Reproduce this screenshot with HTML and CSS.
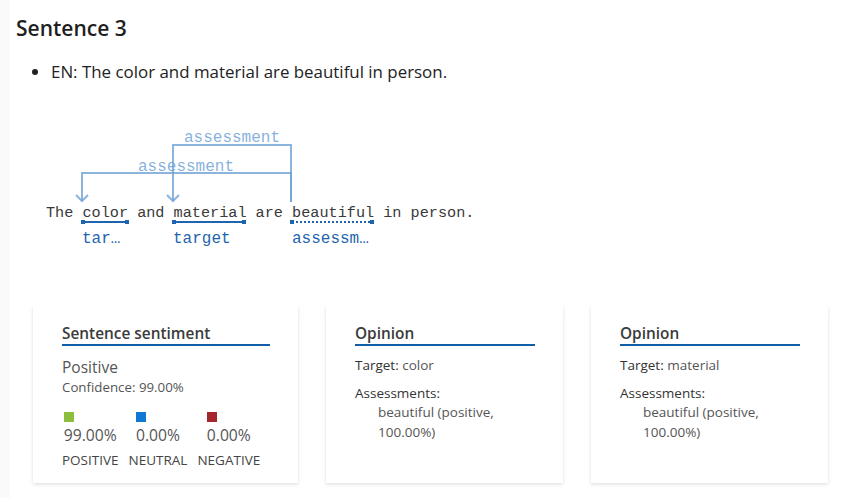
FILE: index.html
```html
<!DOCTYPE html>
<html lang="en">
<head>
<meta charset="utf-8">
<title>Sentence 3</title>
<link rel="stylesheet" href="styles.css">
</head>
<body>
<div class="page">
  <h2 class="heading">Sentence 3</h2>
  <ul class="bullets">
    <li>EN: The color and material are beautiful in person.</li>
  </ul>
  <svg class="diagram" width="500" height="140" viewBox="0 0 500 140" xmlns="http://www.w3.org/2000/svg">
    <g class="rel" fill="none" stroke="#6fa3d6" stroke-width="2" stroke-opacity="0.8">
      <path d="M291 83 V26 H173 V82"/>
      <path d="M167 76 L173 82 L179 76"/>
      <path d="M291 83 V54 H82 V82"/>
      <path d="M76 76 L82 82 L88 76"/>
    </g>
    <text class="rel-label" x="232" y="23" text-anchor="middle">assessment</text>
    <text class="rel-label" x="186" y="52" text-anchor="middle">assessment</text>
    <text class="sent" x="46" y="98" xml:space="preserve">The color and material are beautiful in person.</text>
    <g class="span-line" stroke="#1f64ae" stroke-width="2">
      <line x1="83" y1="103" x2="127" y2="103"/>
      <line x1="174" y1="103" x2="244" y2="103"/>
      <line x1="292" y1="103" x2="372" y2="103" stroke-dasharray="2 2"/>
    </g>
    <g fill="#1f64ae">
      <rect x="81" y="101" width="4" height="4"/>
      <rect x="125" y="101" width="4" height="4"/>
      <rect x="172" y="101" width="4" height="4"/>
      <rect x="242" y="101" width="4" height="4"/>
      <rect x="290" y="101" width="4" height="4"/>
      <rect x="370" y="101" width="4" height="4"/>
    </g>
    <text class="ent-label" x="82" y="124">tar…</text>
    <text class="ent-label" x="173" y="124">target</text>
    <text class="ent-label" x="292" y="124">assessm…</text>
  </svg>
  <div class="cards">
    <div class="card card-wide">
      <div class="card-title">Sentence sentiment</div>
      <div class="label-big">Positive</div>
      <div class="small">Confidence: 99.00%</div>
      <div class="scores">
        <div class="score">
          <div class="score-val"><span class="swatch pos"></span><span class="pct">99.00%</span></div>
          <div class="score-name">POSITIVE</div>
        </div>
        <div class="score">
          <div class="score-val"><span class="swatch neu"></span><span class="pct">0.00%</span></div>
          <div class="score-name">NEUTRAL</div>
        </div>
        <div class="score">
          <div class="score-val"><span class="swatch neg"></span><span class="pct">0.00%</span></div>
          <div class="score-name">NEGATIVE</div>
        </div>
      </div>
    </div>
    <div class="card">
      <div class="card-title">Opinion</div>
      <div class="row"><span class="key">Target:</span> color</div>
      <div class="row"><span class="key">Assessments:</span></div>
      <div class="assess">beautiful (positive, 100.00%)</div>
    </div>
    <div class="card">
      <div class="card-title">Opinion</div>
      <div class="row"><span class="key">Target:</span> material</div>
      <div class="row"><span class="key">Assessments:</span></div>
      <div class="assess">beautiful (positive, 100.00%)</div>
    </div>
  </div>
</div>
</body>
</html>
```

FILE: styles.css
```css
html, body {
  margin: 0;
  padding: 0;
  background: #ffffff;
}
body {
  font-family: "Open Sans", "Noto Sans", sans-serif;
  color: #222;
}
.page {
  width: 856px;
  height: 498px;
  overflow: hidden;
  box-sizing: border-box;
  border-left: 10px solid #fafafa;
}
.heading {
  margin: 0;
  padding: 14px 0 0 6px;
  font-size: 21px;
  font-weight: 600;
  line-height: 28px;
  color: #1f1f1f;
}
.bullets {
  margin: 19px 0 0 0;
  padding-left: 41px;
  font-size: 16.9px;
  line-height: 22px;
  color: #222;
}
.diagram {
  display: block;
  margin: 36px 0 0 -10px;
}
.diagram text {
  font-family: "Liberation Mono", "DejaVu Sans Mono", monospace;
}
.sent {
  font-size: 15.2px;
  fill: #3a3a3a;
}
.rel-label {
  font-size: 16px;
  fill: #6fa3d6;
  fill-opacity: 0.85;
}
.ent-label {
  font-size: 16px;
  fill: #1f64ae;
}
.cards {
  display: flex;
  gap: 28px;
  margin: 46px 0 0 23px;
  align-items: flex-start;
}
.card {
  width: 237px;
  height: 178px;
  box-sizing: border-box;
  padding: 18px 28px 0 29px;
  background: #fff;
  box-shadow: 0 1.6px 3.6px rgba(0,0,0,0.13), 0 0.3px 0.9px rgba(0,0,0,0.11);
}
.card-wide {
  width: 265px;
}
.card-title {
  font-size: 15.4px;
  font-weight: 600;
  line-height: 21px;
  color: #3b3b3b;
  padding-bottom: 0;
  border-bottom: 2px solid #105ea6;
  margin-bottom: 10px;
}
.label-big {
  font-size: 15.5px;
  line-height: 22px;
  color: #555;
}
.small {
  font-size: 13.3px;
  line-height: 18px;
  color: #555;
}
.scores {
  display: flex;
  gap: 10px;
  margin-top: 16px;
}
.score {
  display: flex;
  flex-direction: column;
  align-items: center;
}
.score-val {
  display: flex;
  flex-direction: column;
  align-items: flex-start;
}
.swatch {
  display: block;
  width: 10px;
  height: 10px;
}
.pos { background: #8cbd3c; }
.neu { background: #0f78d4; }
.neg { background: #a4262c; }
.pct {
  font-size: 15.7px;
  line-height: 24px;
  margin-top: 1px;
  color: #555;
}
.score-name {
  font-size: 13.5px;
  line-height: 26px;
  color: #444;
}
.row {
  font-size: 13.5px;
  line-height: 18px;
  color: #555;
  margin-bottom: 10px;
}
.key {
  color: #333;
}
.assess {
  font-size: 13.5px;
  line-height: 20px;
  color: #555;
  margin: -10px 0 0 23px;
  width: 140px;
}
```
